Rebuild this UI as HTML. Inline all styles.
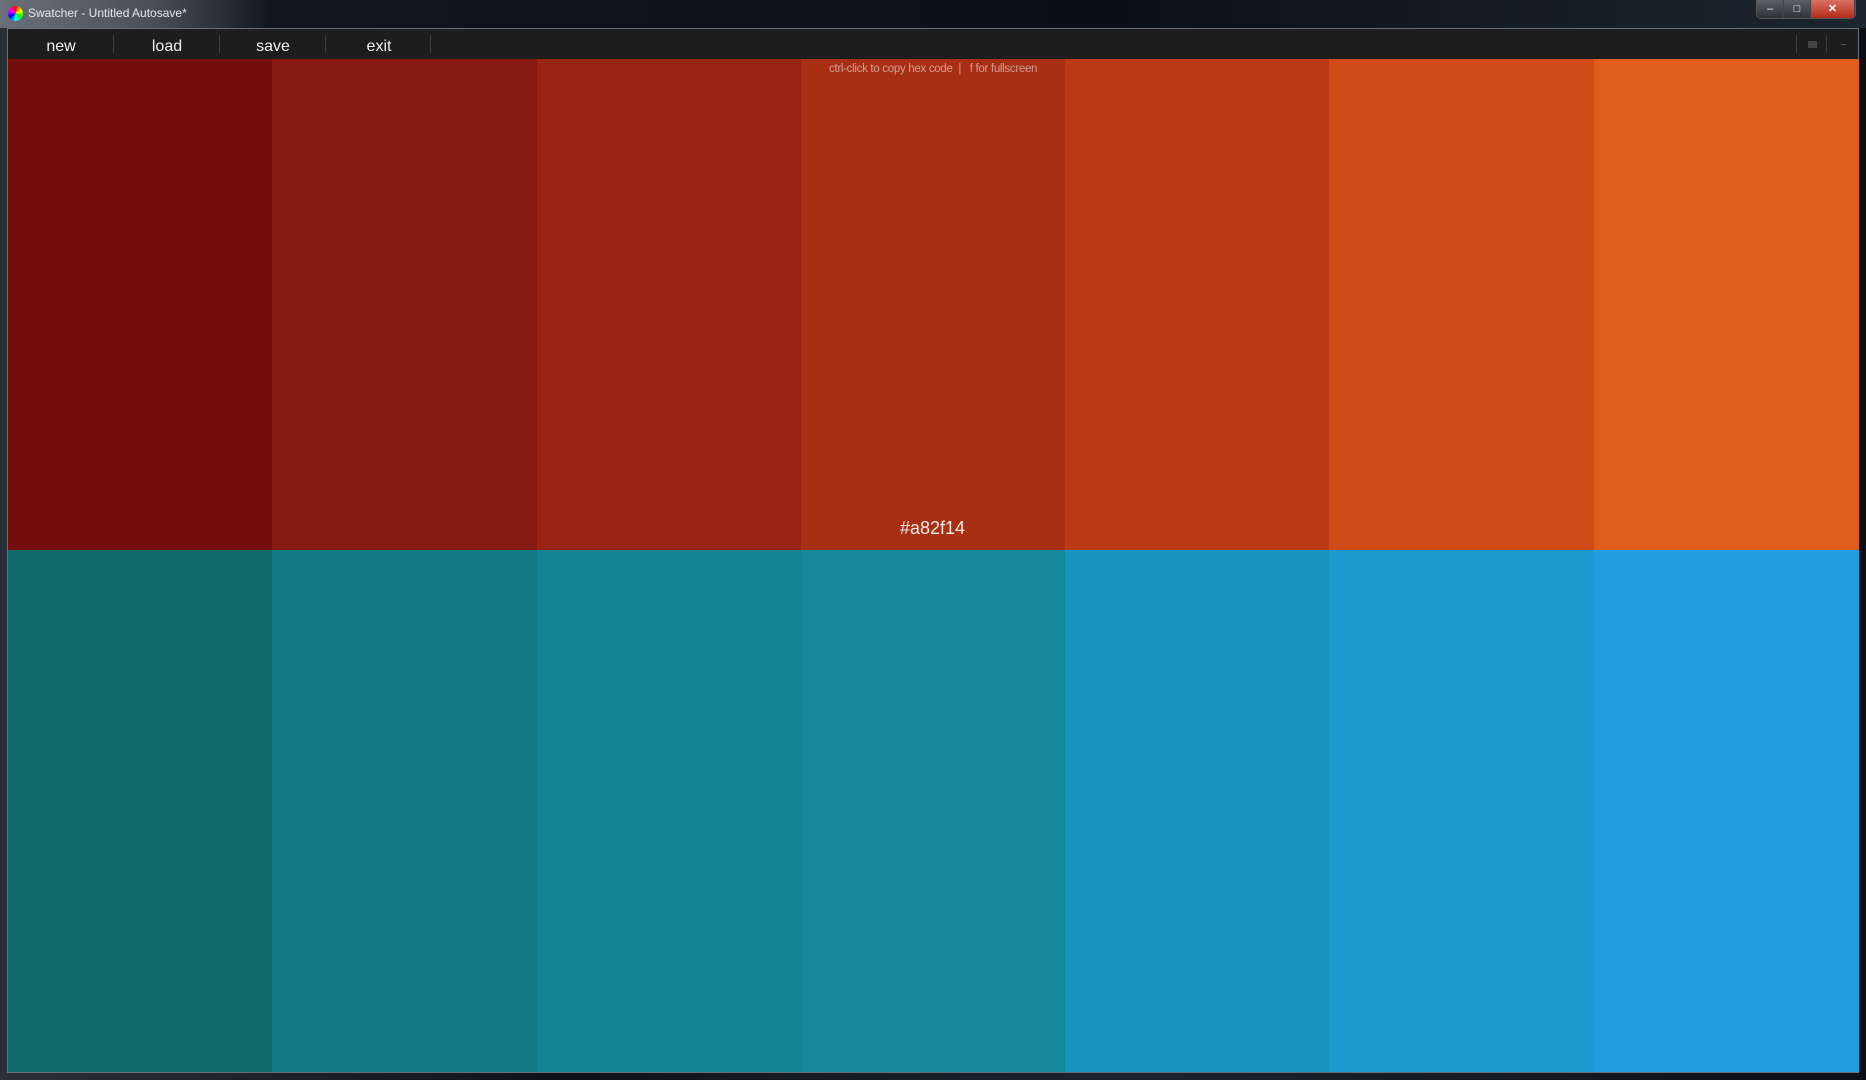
<!DOCTYPE html>
<html><head><meta charset="utf-8"><style>
*{margin:0;padding:0;box-sizing:border-box}
body{width:1866px;height:1080px;overflow:hidden;background:linear-gradient(90deg,#2a3038 0%,#0d1218 30%,#1a2430 60%,#0b0f14 100%);font-family:"Liberation Sans",sans-serif;position:relative}
.title{position:absolute;left:0;top:0;width:1866px;height:28px;background:linear-gradient(90deg,#6a7078 0,#4a5058 150px,#2a3038 220px,#12161c 270px,#0c1016 60%,#1c2630 100%)}
.title span{position:absolute;left:28px;top:6px;font-size:12px;color:#e8e8e8}
.ico{position:absolute;left:8px;top:6px;width:15px;height:15px;border-radius:50%;background:conic-gradient(red,yellow,lime,cyan,blue,magenta,red)}
.btns{position:absolute;right:10px;top:0;height:19px;display:flex;border:1px solid #555;border-top:none;border-radius:0 0 5px 5px;overflow:hidden}
.btns div{width:27px;height:19px;background:linear-gradient(#5a6068,#2a3038);border-right:1px solid #444;color:#fff;font-size:11px;text-align:center;line-height:18px}
.btns div.x{width:44px;background:linear-gradient(#d87060,#b02818);font-weight:bold}
.win{position:absolute;left:7px;top:28px;width:1852px;height:1045px;border:1px solid #6a7078;background:#111}
.menu{position:absolute;left:8px;top:29px;width:1850px;height:30px;background:#1d1d1d}
.m{position:absolute;top:3px;height:30px;line-height:30px;color:#f0f0f0;font-size:16px;text-align:center;width:106px}
.sep{position:absolute;top:6px;width:1px;height:18px;background:#3c3c3c}
.grid{position:absolute;left:8px;top:59px;width:1850px;height:1013px}
.c{position:absolute;width:265px}
.hint{position:absolute;left:829px;top:63px;font-size:11.5px;color:#d0a090;letter-spacing:-0.3px}
.hex{position:absolute;left:900px;top:518px;font-size:18px;color:#f2ece8}
</style></head><body>
<div class="title"><div class="ico"></div><span>Swatcher - Untitled Autosave*</span>
<div class="btns"><div>–</div><div>□</div><div class="x">✕</div></div></div>
<div class="win"></div>
<div class="menu">
<div class="m" style="left:0px">new</div><div class="sep" style="left:105px"></div>
<div class="m" style="left:106px">load</div><div class="sep" style="left:211px"></div>
<div class="m" style="left:212px">save</div><div class="sep" style="left:317px"></div>
<div class="m" style="left:318px">exit</div><div class="sep" style="left:422px"></div>
<div class="sep" style="left:1788px"></div><div style="position:absolute;left:1800px;top:12px;width:9px;height:7px;background:#444"></div><div class="sep" style="left:1818px"></div>
<div style="position:absolute;left:1833px;top:15px;width:5px;height:1px;background:#555"></div>
</div>
<div class="grid">
<div class="c" style="left:0;top:0;height:491px;background:#730e0d"></div>
<div class="c" style="left:264px;top:0;height:491px;background:#861911"></div>
<div class="c" style="left:529px;top:0;height:491px;background:#982313"></div>
<div class="c" style="left:793px;top:0;height:491px;background:#a82f14"></div>
<div class="c" style="left:1057px;top:0;height:491px;background:#bb3b16"></div>
<div class="c" style="left:1321px;top:0;height:491px;background:#cf4c18"></div>
<div class="c" style="left:1586px;top:0;height:491px;background:#de5c1c"></div>
<div class="c" style="left:0;top:491px;height:522px;background:#0f6b6c"></div>
<div class="c" style="left:264px;top:491px;height:522px;background:#117a84"></div>
<div class="c" style="left:529px;top:491px;height:522px;background:#148494"></div>
<div class="c" style="left:793px;top:491px;height:522px;background:#15899c"></div>
<div class="c" style="left:1057px;top:491px;height:522px;background:#1794bd"></div>
<div class="c" style="left:1321px;top:491px;height:522px;background:#199bcf"></div>
<div class="c" style="left:1586px;top:491px;height:522px;background:#1f9ee0"></div>
</div>
<div class="hint">ctrl-click to copy hex code &nbsp;| &nbsp; f for fullscreen</div>
<div class="hex">#a82f14</div>
</body></html>
